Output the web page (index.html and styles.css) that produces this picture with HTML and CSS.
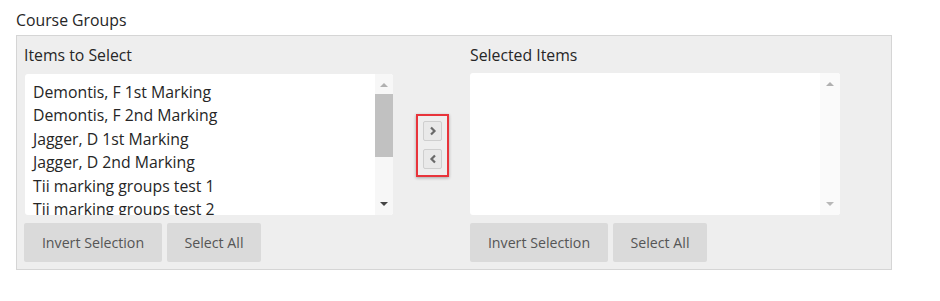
FILE: index.html
```html
<!DOCTYPE html>
<html>
<head>
<meta charset="utf-8">
<link rel="stylesheet" href="styles.css">
</head>
<body>
<div class="page">
  <div class="title">Course Groups</div>
  <div class="panel">
    <div class="label">Items to Select</div>
    <div class="label-spacer"></div>
    <div class="label">Selected Items</div>

    <div class="listbox left">
      <ul class="items">
        <li>Demontis, F 1st Marking</li>
        <li>Demontis, F 2nd Marking</li>
        <li>Jagger, D 1st Marking</li>
        <li>Jagger, D 2nd Marking</li>
        <li>Tii marking groups test 1</li>
        <li>Tii marking groups test 2</li>
      </ul>
      <div class="scrollbar">
        <span class="arrow up light"></span>
        <span class="thumb"></span>
        <span class="track-fill"></span>
        <span class="arrow down dark"></span>
      </div>
    </div>

    <div class="movers">
      <div class="mover-box">
        <button class="mover" aria-label="Add">
          <svg width="8" height="10" viewBox="0 0 8 10"><path d="M2 1.5 L5.5 5 L2 8.5" fill="none" stroke="#6a6a6a" stroke-width="2.2"/></svg>
        </button>
        <button class="mover" aria-label="Remove">
          <svg width="8" height="10" viewBox="0 0 8 10"><path d="M6 1.5 L2.5 5 L6 8.5" fill="none" stroke="#6a6a6a" stroke-width="2.2"/></svg>
        </button>
      </div>
    </div>

    <div class="listbox right">
      <ul class="items"></ul>
      <div class="scrollbar">
        <span class="arrow up light"></span>
        <span class="track-fill"></span>
        <span class="arrow down light"></span>
      </div>
    </div>

    <div class="btns">
      <button class="btn invert">Invert Selection</button>
      <button class="btn all">Select All</button>
    </div>
    <div></div>
    <div class="btns">
      <button class="btn invert">Invert Selection</button>
      <button class="btn all">Select All</button>
    </div>
  </div>
</div>
</body>
</html>
```

FILE: styles.css
```css
* { box-sizing: border-box; }
html, body { margin: 0; padding: 0; background: #fff; }
body {
  font-family: "Open Sans", "Liberation Sans", sans-serif;
  color: #262626;
}
.page { padding: 8px 0 0 16px; }
.title {
  font-size: 15.8px;
  line-height: 24px;
  height: 27px;
  color: #262626;
}
.panel {
  width: 876px;
  height: 235px;
  background: #eeeeee;
  border: 1px solid #d5d5d5;
  display: grid;
  grid-template-columns: 369px 56px 391px;
  grid-template-rows: 38px 141px 47px;
  padding: 0 0 7px 7px;
}
.label {
  font-size: 15.8px;
  line-height: 24px;
  padding-top: 7px;
  color: #262626;
}
.panel > .label:nth-child(3) { margin-left: 21px; }
.panel > .label:nth-child(1) { margin-right: 23px; }
.listbox {
  background: #fff;
  border-radius: 3px;
  display: flex;
  overflow: hidden;
  height: 141px;
}
.listbox.left { margin-left: 1px; }
.listbox.right { margin-left: 21px; width: 370px; height: 142px; margin-top: -1px; }
.items {
  list-style: none;
  margin: 0;
  padding: 6.5px 0 0 8px;
  flex: 1;
  font-size: 15.8px;
  line-height: 23.5px;
  color: #262626;
  overflow: hidden;
  white-space: nowrap;
}
.scrollbar {
  width: 18px;
  background: #f7f7f7;
  display: flex;
  flex-direction: column;
  align-items: center;
}
.right .scrollbar { width: 20px; background: #fafafa; }
.arrow {
  width: 0; height: 0;
  border-left: 4px solid transparent;
  border-right: 4px solid transparent;
  flex: none;
}
.arrow.up { border-bottom: 4px solid #a8a8a8; margin: 9px 0 7px; }
.arrow.down { border-top: 4px solid #444; margin: 7px 0 9px; }
.arrow.up.light { border-bottom-color: #b0b0b0; }
.arrow.down.light { border-top-color: #b8b8b8; }
.thumb {
  width: 18px;
  height: 63px;
  background: #c1c1c1;
  flex: none;
}
.track-fill { flex: 1; }
.movers {
  display: flex;
  align-items: center;
  padding-left: 23px;
}
.mover-box {
  width: 33px;
  height: 63px;
  border: 2px solid #e8343b;
  box-shadow: 0 1px 3px rgba(0,0,0,0.3);
  display: flex;
  flex-direction: column;
  align-items: center;
  padding-top: 5px;
  gap: 8px;
  margin-top: 1px;
}
.mover {
  width: 19px;
  height: 20px;
  padding: 0;
  border: 1px solid #cfcfcf;
  border-radius: 2px;
  background: #e9e9e9;
  display: flex;
  align-items: center;
  justify-content: center;
}
.btns {
  display: flex;
  gap: 5px;
  padding-top: 8px;
  height: 47px;
}
.panel > .btns:last-child { margin-left: 21px; }
.btn {
  font-family: "Open Sans", "Liberation Sans", sans-serif;
  font-size: 14.2px;
  color: #555;
  background: #dadada;
  border: none;
  border-radius: 2px;
  height: 39px;
  padding: 0;
}
.btn.invert { width: 138px; }
.btn.all { width: 94px; }
```
